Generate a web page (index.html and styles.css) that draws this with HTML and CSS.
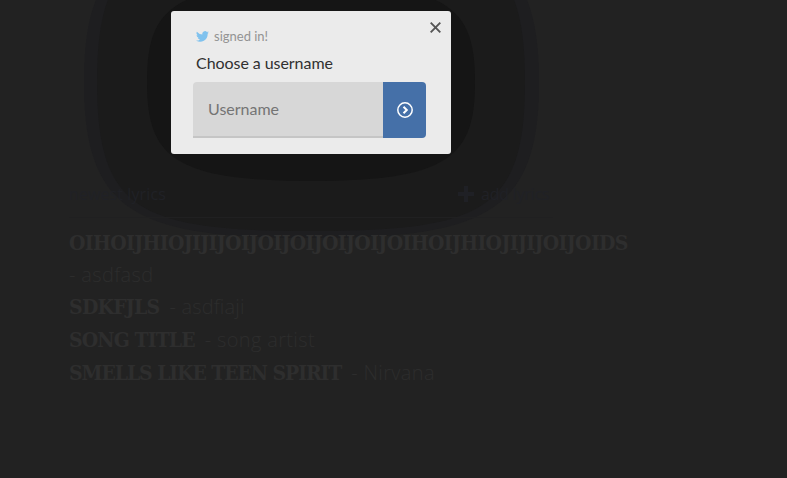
FILE: index.html
```html
<!DOCTYPE html>
<html lang="en">
<head>
<meta charset="utf-8">
<title>Choose a username</title>
<link rel="stylesheet" href="styles.css">
</head>
<body>
<svg class="shade" width="787" height="478" viewBox="0 0 787 478" aria-hidden="true">
  <path fill="#1e1e20" d="M84 82C84 -48 135 -73 311 -73S539 -48 539 82S487 238 311 238S84 212 84 82Z"/>
  <path fill="#1b1b1b" d="M97 82C97 -46 138 -67 311 -67S525 -46 525 82S484 231 311 231S97 210 97 82Z"/>
  <path fill="#151515" d="M147 82C147 8 172 -16 311 -16S475 8 475 82S450 181 311 181S147 156 147 82Z"/>
</svg>
<main class="page">
  <header class="bar">
    <span>newest lyrics</span>
    <a class="add"><svg width="16" height="16" viewBox="0 0 16 16"><path d="M6 0h4v6h6v4h-6v6H6v-6H0V6h6z"/></svg><span>add lyrics</span></a>
  </header>
  <ul class="songs">
    <li><b class="t1">OIHOIJHIOJIJIJOIJOIJOIJOIJOIJOIHOIJHIOJIJIJOIJOIDS</b><br><i>- asdfasd</i></li>
    <li><b class="t2">SDKFJLS</b><i>- asdfiaji</i></li>
    <li><b class="t3">SONG TITLE</b><i>- song artist</i></li>
    <li><b class="t4">SMELLS LIKE TEEN SPIRIT</b><i>- Nirvana</i></li>
  </ul>
</main>
<section class="modal">
  <svg class="close" width="11" height="11" viewBox="0 0 11 11"><path d="M.7.700l9.600 9.600M10.300.700L.700 10.300"/></svg>
  <p class="signed"><svg width="13" height="11" viewBox="0 0 24 20"><path d="M24 2.4a10 10 0 0 1-2.8.8A5 5 0 0 0 23.3.5a10 10 0 0 1-3.1 1.2A4.9 4.9 0 0 0 11.8 6.200A14 14 0 0 1 1.700 1a4.900 4.900 0 0 0 1.500 6.600A5 5 0 0 1 1 7a4.900 4.900 0 0 0 3.900 4.900 5 5 0 0 1-2.200.1 4.900 4.900 0 0 0 4.600 3.400A10 10 0 0 1 0 17.500 14 14 0 0 0 21.500 5z"/></svg><span>signed in!</span></p>
  <h1>Choose a username</h1>
  <form class="field">
    <input type="text" placeholder="Username" aria-label="Username">
    <button type="button" aria-label="Continue"><svg width="16" height="16" viewBox="0 0 16 16"><circle cx="8" cy="8" r="7.200" stroke-width="1.500"/><path d="M6.500 4.700L9.800 8l-3.300 3.300" stroke-width="2"/></svg></button>
  </form>
</section>
</body>
</html>
```
FILE: styles.css
```css
* { box-sizing: border-box; }
html, body { margin: 0; height: 100%; overflow: hidden; }
body { background: #222; font-family: Lato, sans-serif; }
.shade { position: absolute; left: 0; top: 0; }
.page { position: relative; padding: 176px 158px 0 69px; }
.bar {
  display: flex;
  justify-content: space-between;
  align-items: center;
  width: 484px;
  height: 42px;
  padding-bottom: 5px;
  border-bottom: 1px solid #202021;
  color: #202126;
  font: 400 16px/24px "Open Sans", sans-serif;
  letter-spacing: 0.1px;
}
.add { display: flex; align-items: center; gap: 7px; width: 95px; }
.add svg { flex: none; fill: #1f2025; }
.add span { white-space: nowrap; letter-spacing: -0.2px; }
.songs { list-style: none; margin: 9px 0 0; padding: 0; color: #2e2e2e; white-space: nowrap; }
.songs li { height: 33px; line-height: 32px; }
.songs li:first-child { height: 64px; }
.songs b { font: bold 21px/32px "DejaVu Serif", serif; font-stretch: condensed; margin-right: 10px; }
.songs .t1 { letter-spacing: -0.64px; }
.songs .t2 { letter-spacing: -0.75px; }
.songs .t3 { letter-spacing: -0.9px; }
.songs .t4 { letter-spacing: -1.09px; }
.songs i { color: #2d2d2d; font: 300 20px/30px "Open Sans", sans-serif; letter-spacing: 0.35px; }
.songs .t2 + i { letter-spacing: 0.15px; }
.modal {
  position: absolute;
  left: 171px;
  top: 11px;
  width: 280px;
  height: 143px;
  padding: 16px 25px 16px 22px;
  border-radius: 3px;
  background: #ebebeb;
}
.close { position: absolute; right: 10px; top: 11px; fill: none; stroke: #555; stroke-width: 1.9; }
.signed { display: flex; align-items: center; gap: 5px; height: 18px; margin: 0 0 0 3px; color: #939393; font-size: 13px; }
.signed svg { fill: #80c2ee; }
h1 { margin: 6px 0 8px 3px; color: #303030; font-size: 16px; line-height: 23px; font-weight: 400; letter-spacing: -0.06px; }
.field { display: flex; height: 56px; }
.field input {
  width: 190px;
  height: 56px;
  padding: 0 14px 2px 15px;
  border: 0;
  border-bottom: 2px solid #c5c5c5;
  border-radius: 4px 0 0 0;
  background: #d7d7d7;
  font: 16px Lato, sans-serif;
}
.field input::placeholder { color: #747474; opacity: 1; }
.field button {
  display: grid;
  place-items: center;
  width: 43px;
  padding: 0;
  border: 0;
  border-radius: 0 4px 4px 0;
  background: #4570a8;
}
.field button svg { fill: none; stroke: #fff; }
```
